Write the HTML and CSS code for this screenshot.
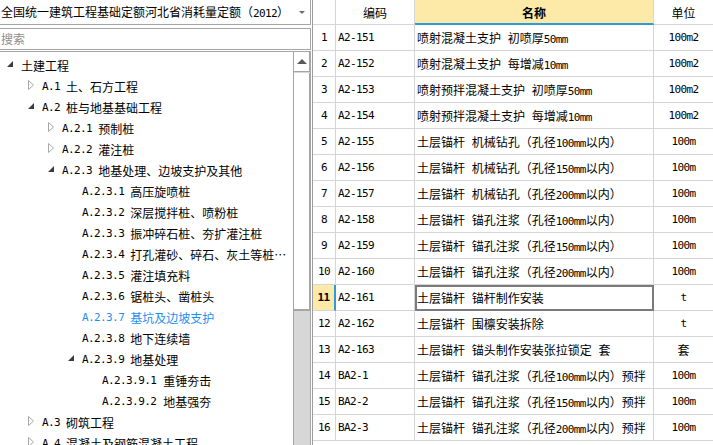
FILE: index.html
```html
<!DOCTYPE html>
<html lang="zh-CN">
  <head>
    <meta charset="UTF-8" />
    <meta name="viewport" content="width=device-width, initial-scale=1.0" />
    <title>定额库</title>
    <link rel="stylesheet" href="styles.css">
  </head>
  <body>
    <div class="app">
      <div class="side">
        <div class="combo">
          <span>全国统一建筑工程基础定额河北省消耗量定额（<span class="m">2012</span>）</span>
          <span class="caret"></span>
        </div>
        <div class="search">搜索</div>
        <div class="tree-box">
          <ul class="tree">
            <li class="lv0"><span class="tg"><svg width="6" height="6" viewBox="0 0 6 6"><path d="M6 0V6H0Z" fill="#3c3c3c"/></svg></span>土建工程</li>
            <li class="lv1"><span class="tg"><svg width="6" height="10" viewBox="0 0 6 10"><path d="M0.5 0.5L5.5 5L0.5 9.5Z" fill="none" stroke="#a8a8a8"/></svg></span><span class="m">A.1</span>土、石方工程</li>
            <li class="lv1"><span class="tg"><svg width="6" height="6" viewBox="0 0 6 6"><path d="M6 0V6H0Z" fill="#3c3c3c"/></svg></span><span class="m">A.2</span>桩与地基基础工程</li>
            <li class="lv2"><span class="tg"><svg width="6" height="10" viewBox="0 0 6 10"><path d="M0.5 0.5L5.5 5L0.5 9.5Z" fill="none" stroke="#a8a8a8"/></svg></span><span class="m">A.2.1</span>预制桩</li>
            <li class="lv2"><span class="tg"><svg width="6" height="10" viewBox="0 0 6 10"><path d="M0.5 0.5L5.5 5L0.5 9.5Z" fill="none" stroke="#a8a8a8"/></svg></span><span class="m">A.2.2</span>灌注桩</li>
            <li class="lv2"><span class="tg"><svg width="6" height="6" viewBox="0 0 6 6"><path d="M6 0V6H0Z" fill="#3c3c3c"/></svg></span><span class="m">A.2.3</span>地基处理、边坡支护及其他</li>
            <li class="lv3"><span class="tg"></span><span class="m">A.2.3.1</span>高压旋喷桩</li>
            <li class="lv3"><span class="tg"></span><span class="m">A.2.3.2</span>深层搅拌桩、喷粉桩</li>
            <li class="lv3"><span class="tg"></span><span class="m">A.2.3.3</span>振冲碎石桩、夯扩灌注桩</li>
            <li class="lv3"><span class="tg"></span><span class="m">A.2.3.4</span>打孔灌砂、碎石、灰土等桩…</li>
            <li class="lv3"><span class="tg"></span><span class="m">A.2.3.5</span>灌注填充料</li>
            <li class="lv3"><span class="tg"></span><span class="m">A.2.3.6</span>锯桩头、凿桩头</li>
            <li class="lv3 sel"><span class="tg"></span><span class="m">A.2.3.7</span>基坑及边坡支护</li>
            <li class="lv3"><span class="tg"></span><span class="m">A.2.3.8</span>地下连续墙</li>
            <li class="lv3"><span class="tg"><svg width="6" height="6" viewBox="0 0 6 6"><path d="M6 0V6H0Z" fill="#3c3c3c"/></svg></span><span class="m">A.2.3.9</span>地基处理</li>
            <li class="lv4"><span class="tg"></span><span class="m wide">A.2.3.9.1</span>重锤夯击</li>
            <li class="lv4"><span class="tg"></span><span class="m wide">A.2.3.9.2</span>地基强夯</li>
            <li class="lv1"><span class="tg"><svg width="6" height="10" viewBox="0 0 6 10"><path d="M0.5 0.5L5.5 5L0.5 9.5Z" fill="none" stroke="#a8a8a8"/></svg></span><span class="m">A.3</span>砌筑工程</li>
            <li class="lv1"><span class="tg"><svg width="6" height="10" viewBox="0 0 6 10"><path d="M0.5 0.5L5.5 5L0.5 9.5Z" fill="none" stroke="#a8a8a8"/></svg></span><span class="m">A.4</span>混凝土及钢筋混凝土工程</li>
          </ul>
          <div class="vscroll">
            <div class="up"><span class="up-arrow"></span></div>
            <div class="thumb"></div>
          </div>
        </div>
      </div>

      <div class="grid">
        <div class="row head">
          <div class="cell"></div>
          <div class="cell center">编码</div>
          <div class="cell center active-col">名称</div>
          <div class="cell center">单位</div>
        </div>
        <div class="row"><div class="cell center m">1</div><div class="cell m">A2-151</div><div class="cell">喷射混凝土支护 初喷厚<span class="m">50mm</span></div><div class="cell center m">100m2</div></div>
        <div class="row"><div class="cell center m">2</div><div class="cell m">A2-152</div><div class="cell">喷射混凝土支护 每增减<span class="m">10mm</span></div><div class="cell center m">100m2</div></div>
        <div class="row"><div class="cell center m">3</div><div class="cell m">A2-153</div><div class="cell">喷射预拌混凝土支护 初喷厚<span class="m">50mm</span></div><div class="cell center m">100m2</div></div>
        <div class="row"><div class="cell center m">4</div><div class="cell m">A2-154</div><div class="cell">喷射预拌混凝土支护 每增减<span class="m">10mm</span></div><div class="cell center m">100m2</div></div>
        <div class="row"><div class="cell center m">5</div><div class="cell m">A2-155</div><div class="cell">土层锚杆 机械钻孔（孔径<span class="m">100mm</span>以内）</div><div class="cell center m">100m</div></div>
        <div class="row"><div class="cell center m">6</div><div class="cell m">A2-156</div><div class="cell">土层锚杆 机械钻孔（孔径<span class="m">150mm</span>以内）</div><div class="cell center m">100m</div></div>
        <div class="row"><div class="cell center m">7</div><div class="cell m">A2-157</div><div class="cell">土层锚杆 机械钻孔（孔径<span class="m">200mm</span>以内）</div><div class="cell center m">100m</div></div>
        <div class="row"><div class="cell center m">8</div><div class="cell m">A2-158</div><div class="cell">土层锚杆 锚孔注浆（孔径<span class="m">100mm</span>以内）</div><div class="cell center m">100m</div></div>
        <div class="row"><div class="cell center m">9</div><div class="cell m">A2-159</div><div class="cell">土层锚杆 锚孔注浆（孔径<span class="m">150mm</span>以内）</div><div class="cell center m">100m</div></div>
        <div class="row"><div class="cell center m">10</div><div class="cell m">A2-160</div><div class="cell">土层锚杆 锚孔注浆（孔径<span class="m">200mm</span>以内）</div><div class="cell center m">100m</div></div>
        <div class="row current"><div class="cell center m num">11</div><div class="cell m">A2-161</div><div class="cell focus">土层锚杆 锚杆制作安装</div><div class="cell center m">t</div></div>
        <div class="row"><div class="cell center m">12</div><div class="cell m">A2-162</div><div class="cell">土层锚杆 围檩安装拆除</div><div class="cell center m">t</div></div>
        <div class="row"><div class="cell center m">13</div><div class="cell m">A2-163</div><div class="cell">土层锚杆 锚头制作安装张拉锁定 套</div><div class="cell center">套</div></div>
        <div class="row"><div class="cell center m">14</div><div class="cell m">BA2-1</div><div class="cell">土层锚杆 锚孔注浆（孔径<span class="m">100mm</span>以内）预拌</div><div class="cell center m">100m</div></div>
        <div class="row"><div class="cell center m">15</div><div class="cell m">BA2-2</div><div class="cell">土层锚杆 锚孔注浆（孔径<span class="m">150mm</span>以内）预拌</div><div class="cell center m">100m</div></div>
        <div class="row"><div class="cell center m">16</div><div class="cell m">BA2-3</div><div class="cell">土层锚杆 锚孔注浆（孔径<span class="m">200mm</span>以内）预拌</div><div class="cell center m">100m</div></div>
      </div>
    </div>
  </body>
</html>
```

FILE: styles.css
```css
body {
  margin: 0;
  font-family: "Noto Sans CJK SC", "Noto Sans", sans-serif;
  font-size: 12px;
  color: #000;
  background-color: #fff;
}

.m {
  font-family: "DejaVu Sans Mono", "Liberation Mono", monospace;
  font-size: 11px;
  letter-spacing: -0.6px;
}

.app {
  display: flex;
  width: 713px;
  height: 445px;
  overflow: hidden;
}

/* left panel */
.side {
  width: 311px;
  flex: none;
  display: flex;
  flex-direction: column;
}

.combo {
  height: 25px;
  box-sizing: border-box;
  border-right: 1px solid #a5a5a5;
  border-bottom: 1px solid #a5a5a5;
  display: flex;
  align-items: center;
  padding: 1px 0 0 1px;
  line-height: 16px;
  white-space: nowrap;
}

.caret {
  margin-left: auto;
  margin-right: 5px;
  border-top: 3px solid #6d6d6d;
  border-left: 3px solid transparent;
  border-right: 3px solid transparent;
}

.search {
  margin-top: 3px;
  height: 20px;
  border: 1px solid #a5a5a5;
  border-left: none;
  color: #8c8c8c;
  line-height: 20px;
  padding-left: 1px;
}

.tree-box {
  flex: 1;
  display: flex;
  margin-top: 1px;
  border-top: 1px solid #a5a5a5;
  border-right: 1px solid #a5a5a5;
  overflow: hidden;
}

.tree {
  flex: 1;
  list-style: none;
  margin: 0;
  padding: 3px 0 0;
  overflow: hidden;
}

.tree li {
  height: 21px;
  display: flex;
  align-items: center;
  white-space: nowrap;
  line-height: 16px;
}

.tree .m {
  margin-right: 6px;
}

.tree .wide {
  margin-right: 7px;
}

.tree .sel {
  color: #1d8ff2;
}

.tg {
  width: 16px;
  flex: none;
  display: flex;
  align-items: center;
  padding-left: 2px;
  box-sizing: border-box;
}

.tg svg {
  margin-bottom: 3px;
}

.lv0 { padding-left: 5px; }
.lv1 { padding-left: 26px; }
.lv2 { padding-left: 46px; }
.lv3 { padding-left: 66px; }
.lv4 { padding-left: 86px; }

.vscroll {
  width: 16px;
  flex: none;
  border-left: 1px solid #a5a5a5;
  background-color: #d7d7d7;
  display: flex;
  flex-direction: column;
}

.up {
  height: 19px;
  background-color: #fff;
  border-right: 1px solid #a5a5a5;
  border-bottom: 1px solid #a5a5a5;
  display: flex;
  align-items: center;
  justify-content: center;
}

.up-arrow {
  border-bottom: 5px solid #5a5a5a;
  border-left: 5px solid transparent;
  border-right: 5px solid transparent;
}

.thumb {
  height: 236px;
  margin-top: 1px;
  background-color: #fff;
  border-right: 1px solid #a5a5a5;
  border-bottom: 2px solid #a5a5a5;
}

/* right grid */
.grid {
  flex: 1;
  margin-left: 1px;
  border-left: 1px solid #9c9c9c;
  overflow: hidden;
}

.row {
  display: grid;
  grid-template-columns: 23px 79px 239px 60px;
  height: 26px;
}

.row.head {
  height: 25px;
}

.cell {
  box-sizing: border-box;
  border-right: 1px solid #d5d5d5;
  border-bottom: 1px solid #d5d5d5;
  padding: 5px 0 0 2px;
  white-space: nowrap;
  overflow: hidden;
  line-height: 16px;
  word-spacing: 4px;
}

.cell.center {
  text-align: center;
  padding-left: 0;
}

.active-col {
  background-color: #fde9a8;
  border-bottom: 2px solid #2d9bd8;
  font-weight: bold;
}

.current .num {
  background-color: #fde9a8;
  border-right: 2px solid #2d9bd8;
  font-weight: bold;
}

.focus {
  outline: 2px solid #7b7b7b;
  outline-offset: -2px;
}
```
